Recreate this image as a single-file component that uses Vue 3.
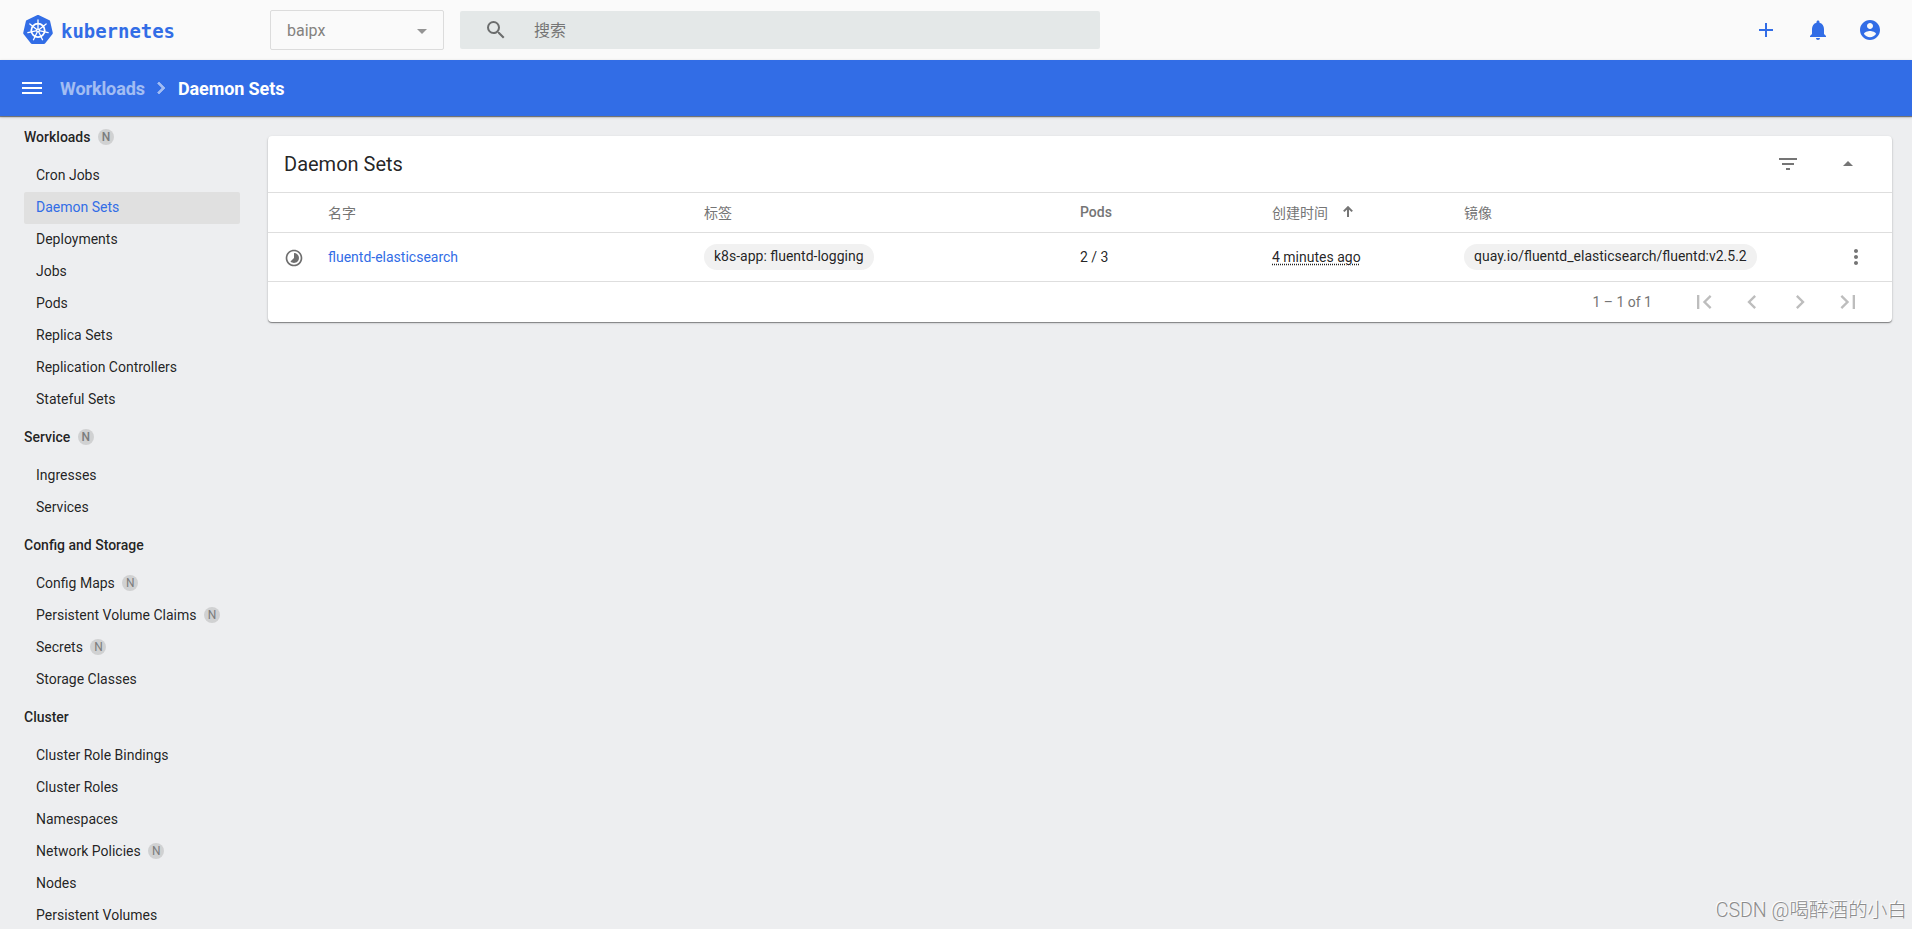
<template>
  <div class="shell">
    <header class="topbar">
      <a class="brand">
        <svg class="brand-mark" viewBox="0 0 30 30" width="30" height="30">
          <path
            d="M15 1.2 L25.8 6.4 L28.5 18.1 L21 27.6 L9 27.6 L1.5 18.1 L4.2 6.4 Z"
            fill="#326de6"
            stroke="#326de6"
            stroke-width="2.6"
            stroke-linejoin="round"
          />
          <g fill="none" stroke="#fff" stroke-linecap="round">
            <circle cx="15" cy="15.4" r="6.7" stroke-width="1.8" />
            <path
              v-for="n in 7"
              :key="n"
              d="M15 14.2 V5"
              stroke-width="1.3"
              :transform="`rotate(${(n - 1) * (360 / 7)} 15 15.4)`"
            />
          </g>
          <circle cx="15" cy="15.4" r="1.9" fill="#fff" />
          <circle cx="15" cy="15.4" r="0.7" fill="#326de6" />
        </svg>
        <svg class="brand-name" width="118" height="30">
          <text x="0" y="22.5" textLength="114" lengthAdjust="spacingAndGlyphs">kubernetes</text>
        </svg>
      </a>

      <div class="namespace">
        <span>baipx</span>
        <svg width="10" height="5" viewBox="0 0 10 5"><path d="M0 0h10L5 5z" /></svg>
      </div>

      <div class="search">
        <svg class="icon" viewBox="0 0 24 24"><path :d="icons.search" /></svg>
        <span>搜索</span>
      </div>

      <div class="actions">
        <svg v-for="name in ['add', 'bell', 'account']" :key="name" class="icon" viewBox="0 0 24 24">
          <path :d="icons[name]" />
        </svg>
      </div>
    </header>

    <nav class="crumbs">
      <svg class="menu" width="20" height="12" viewBox="0 0 20 12">
        <path d="M0 0h20v2H0zM0 5h20v2H0zM0 10h20v2H0z" />
      </svg>
      <span class="crumb parent">Workloads</span>
      <svg class="crumb-sep icon" viewBox="0 0 24 24"><path :d="icons.next" /></svg>
      <span class="crumb">Daemon Sets</span>
    </nav>

    <div class="body">
      <aside class="sidebar">
        <section v-for="group in groups" :key="group.title">
          <h3 class="group-title">
            {{ group.title }}<span v-if="group.namespaced" class="badge">N</span>
          </h3>
          <a
            v-for="item in group.items"
            :key="item.label"
            class="nav-item"
            :class="{ active: item.label === current }"
          >
            {{ item.label }}<span v-if="item.namespaced" class="badge">N</span>
          </a>
        </section>
      </aside>

      <main class="content">
        <div class="card">
          <div class="card-head">
            <h2>Daemon Sets</h2>
            <svg class="icon filter" viewBox="0 0 24 24"><path :d="icons.filter" /></svg>
            <svg class="icon" viewBox="0 0 24 24"><path :d="icons.collapse" /></svg>
          </div>

          <div class="row row-head">
            <span></span>
            <span>名字</span>
            <span>标签</span>
            <span class="latin">Pods</span>
            <span class="sorted">
              创建时间
              <svg width="10" height="11" viewBox="0 0 10 11">
                <path d="M5 11V1.4M0.8 5.4L5 1.2L9.2 5.4" />
              </svg>
            </span>
            <span>镜像</span>
            <span></span>
          </div>

          <div v-for="set in daemonSets" :key="set.name" class="row">
            <svg class="icon status" viewBox="0 0 24 24"><path :d="icons.timelapse" /></svg>
            <a class="link">{{ set.name }}</a>
            <span><span class="chip">{{ set.label }}</span></span>
            <span>{{ set.pods }}</span>
            <span><span class="age">{{ set.age }}</span></span>
            <span><span class="chip">{{ set.image }}</span></span>
            <svg class="icon" viewBox="0 0 24 24"><path :d="icons.more" /></svg>
          </div>

          <div class="pager">
            <span class="range">1 – 1 of 1</span>
            <span v-for="name in ['first', 'prev', 'next', 'last']" :key="name" class="pager-btn">
              <svg viewBox="0 0 24 24"><path :d="icons[name]" /></svg>
            </span>
          </div>
        </div>
      </main>
    </div>

    <div class="watermark">CSDN @喝醉酒的小白</div>
  </div>
</template>

<script setup>
const current = 'Daemon Sets'

const groups = [
  {
    title: 'Workloads',
    namespaced: true,
    items: [
      { label: 'Cron Jobs' },
      { label: 'Daemon Sets' },
      { label: 'Deployments' },
      { label: 'Jobs' },
      { label: 'Pods' },
      { label: 'Replica Sets' },
      { label: 'Replication Controllers' },
      { label: 'Stateful Sets' },
    ],
  },
  {
    title: 'Service',
    namespaced: true,
    items: [{ label: 'Ingresses' }, { label: 'Services' }],
  },
  {
    title: 'Config and Storage',
    items: [
      { label: 'Config Maps', namespaced: true },
      { label: 'Persistent Volume Claims', namespaced: true },
      { label: 'Secrets', namespaced: true },
      { label: 'Storage Classes' },
    ],
  },
  {
    title: 'Cluster',
    items: [
      { label: 'Cluster Role Bindings' },
      { label: 'Cluster Roles' },
      { label: 'Namespaces' },
      { label: 'Network Policies', namespaced: true },
      { label: 'Nodes' },
      { label: 'Persistent Volumes' },
    ],
  },
]

const daemonSets = [
  {
    name: 'fluentd-elasticsearch',
    label: 'k8s-app: fluentd-logging',
    pods: '2 / 3',
    age: '4 minutes ago',
    image: 'quay.io/fluentd_elasticsearch/fluentd:v2.5.2',
  },
]

const icons = {
  search:
    'M15.5 14h-.79l-.28-.27A6.47 6.47 0 0 0 16 9.5 6.5 6.5 0 1 0 9.5 16c1.61 0 3.09-.59 4.23-1.57l.27.28v.79l5 4.99L20.49 19l-4.99-5zm-6 0C7.01 14 5 11.99 5 9.5S7.01 5 9.5 5 14 7.01 14 9.5 11.99 14 9.5 14z',
  add: 'M19 13h-6v6h-2v-6H5v-2h6V5h2v6h6v2z',
  bell: 'M12 22c1.1 0 2-.9 2-2h-4c0 1.1.89 2 2 2zm6-6v-5c0-3.07-1.64-5.64-4.5-6.32V4c0-.83-.67-1.5-1.5-1.5s-1.5.67-1.5 1.5v.68C7.63 5.36 6 7.92 6 11v5l-2 2v1h16v-1l-2-2z',
  account:
    'M12 2C6.48 2 2 6.48 2 12s4.48 10 10 10 10-4.48 10-10S17.52 2 12 2zm0 3c1.66 0 3 1.34 3 3s-1.34 3-3 3-3-1.34-3-3 1.34-3 3-3zm0 14.2c-2.5 0-4.71-1.28-6-3.22.03-1.99 4-3.08 6-3.08 1.99 0 5.97 1.09 6 3.08-1.29 1.94-3.5 3.22-6 3.22z',
  filter: 'M10 18h4v-2h-4v2zM3 6v2h18V6H3zm3 7h12v-2H6v2z',
  collapse: 'M7 14l5-5 5 5z',
  timelapse:
    'M16.24 7.76A5.974 5.974 0 0 0 12 6v6l-4.24 4.24c2.34 2.34 6.14 2.34 8.49 0a5.99 5.99 0 0 0-.01-8.48zM12 2C6.48 2 2 6.48 2 12s4.48 10 10 10 10-4.48 10-10S17.52 2 12 2zm0 18c-4.42 0-8-3.58-8-8s3.58-8 8-8 8 3.58 8 8-3.58 8-8 8z',
  more: 'M12 8c1.1 0 2-.9 2-2s-.9-2-2-2-2 .9-2 2 .9 2 2 2zm0 2c-1.1 0-2 .9-2 2s.9 2 2 2 2-.9 2-2-.9-2-2-2zm0 6c-1.1 0-2 .9-2 2s.9 2 2 2 2-.9 2-2-.9-2-2-2z',
  first: 'M18.41 16.59L13.82 12l4.59-4.59L17 6l-6 6 6 6zM6 6h2v12H6z',
  prev: 'M15.41 7.41L14 6l-6 6 6 6 1.41-1.41L10.83 12z',
  next: 'M10 6L8.59 7.41 13.17 12l-4.58 4.59L10 18l6-6z',
  last: 'M5.59 7.41L10.18 12l-4.59 4.59L7 18l6-6-6-6zM16 6h2v12h-2z',
}
</script>

<style>
body {
  background: #fff;
  overflow: hidden;
}
</style>

<style scoped>
.shell {
  position: relative;
  display: flex;
  flex-direction: column;
  width: 1912px;
  height: 929px;
  overflow: hidden;
  background: #edeef0;
  color: rgba(0, 0, 0, 0.87);
  font-family: Roboto, 'Noto Sans CJK SC', sans-serif;
  font-size: 14px;
}

.icon {
  flex: none;
  width: 24px;
  height: 24px;
  fill: currentColor;
}

.topbar {
  display: flex;
  flex: none;
  align-items: center;
  box-sizing: border-box;
  height: 60px;
  padding: 0 30px 0 23px;
  background: #fafafa;
}

.brand {
  display: flex;
  gap: 8px;
  width: 247px;
}

.brand-name {
  overflow: visible;
}

.brand-name text {
  fill: #326de6;
  font-family: 'DejaVu Sans Mono', monospace;
  font-size: 20px;
  font-weight: 700;
}

.namespace {
  display: flex;
  align-items: center;
  justify-content: space-between;
  box-sizing: border-box;
  width: 174px;
  height: 40px;
  padding: 0 16px;
  border: 1px solid #dcdcdc;
  border-radius: 2px;
  color: #84827f;
  font-size: 16px;
}

.namespace svg {
  margin-top: 3px;
  fill: #949494;
}

.search {
  display: flex;
  align-items: center;
  gap: 26px;
  box-sizing: border-box;
  width: 640px;
  height: 38px;
  margin-left: 16px;
  padding: 0 24px;
  border-radius: 2px;
  background: #e4e8e8;
  color: #757575;
  font-size: 16px;
}

.search span {
  padding-bottom: 2px;
}

.search .icon {
  color: #6b6d6d;
}

.actions {
  display: flex;
  gap: 28px;
  margin-left: auto;
  color: #326de6;
}

.crumbs {
  z-index: 1;
  display: flex;
  flex: none;
  align-items: center;
  height: 56px;
  padding-left: 22px;
  background: #326de6;
  box-shadow: 0 1px 1px rgba(0, 0, 0, 0.45), 0 1px 3px rgba(0, 0, 0, 0.2);
  color: #fff;
}

.menu {
  margin-right: 18px;
  fill: #fff;
}

.crumb {
  font-size: 18px;
  font-weight: 700;
  letter-spacing: -0.1px;
}

.parent,
.crumb-sep {
  opacity: 0.55;
}

.crumb-sep {
  margin: 0 5px 0 4px;
  stroke: currentColor;
  stroke-width: 0.8;
}

.body {
  display: flex;
  flex: 1;
  min-height: 0;
}

.sidebar {
  flex: none;
  width: 216px;
  margin: 0 28px 0 24px;
}

.group-title,
.nav-item {
  display: flex;
  align-items: center;
  box-sizing: border-box;
  margin: 0;
  padding-bottom: 2px;
  font-size: 14px;
}

.group-title {
  height: 44px;
  font-weight: 500;
}

.nav-item {
  height: 32px;
  padding-left: 12px;
  border-radius: 2px;
}

.nav-item.active {
  background: #e0e0e0;
  color: #326de6;
}

.badge {
  width: 16px;
  height: 16px;
  margin-left: 7.5px;
  border-radius: 50%;
  background: #d0d1d2;
  color: #7b7c7d;
  font-size: 12px;
  line-height: 17px;
  text-align: center;
}

.content {
  flex: 1;
  padding: 20px 20px 0 0;
}

.card {
  border-radius: 4px;
  background: #fff;
  box-shadow: 0 1px 1px rgba(0, 0, 0, 0.4), 0 1px 3px rgba(0, 0, 0, 0.14);
}

.card-head {
  display: flex;
  align-items: center;
  height: 56px;
  padding: 0 32px 0 16px;
  color: #757575;
}

.card-head h2 {
  flex: 1;
  margin: 0;
  color: rgba(0, 0, 0, 0.87);
  font-size: 20px;
  font-weight: 400;
}

.filter {
  margin-right: 36px;
}

.row {
  display: grid;
  grid-template-columns: 44px 376px 376px 192px 192px 380px 24px;
  align-items: center;
  height: 48px;
  padding-left: 16px;
  border-top: 1px solid #dedede;
}

.row-head {
  height: 37px;
  padding-bottom: 2px;
  color: #757575;
}

.latin {
  font-size: 14px;
  font-weight: 500;
}

.sorted {
  display: flex;
  align-items: center;
  gap: 15px;
}

.sorted svg {
  fill: none;
  stroke: #757575;
  stroke-width: 2;
}

.status {
  width: 20px;
  height: 20px;
  margin-top: 2px;
  color: #6e6e6e;
}

.row > .icon:last-child {
  color: #757575;
}

.link {
  color: #326de6;
}

.chip {
  display: inline-block;
  height: 26px;
  padding: 0 10px;
  border-radius: 13px;
  background: #f1f1f1;
  line-height: 25px;
}

.age {
  text-decoration: underline dotted;
  text-underline-offset: 2px;
}

.pager {
  display: flex;
  align-items: center;
  height: 40px;
  padding-right: 20px;
  border-top: 1px solid #dedede;
  color: #757575;
}

.range {
  margin: 0 28px 0 auto;
}

.pager-btn {
  display: flex;
  justify-content: center;
  width: 48px;
}

.pager-btn svg {
  width: 28px;
  height: 28px;
  fill: #bdbdbd;
}

.watermark {
  position: absolute;
  right: 5px;
  bottom: 4px;
  color: #8c8c8c;
  font-size: 19.6px;
  font-weight: 300;
  line-height: 28px;
  text-shadow: -1px -1px 0 #fff;
}
</style>
